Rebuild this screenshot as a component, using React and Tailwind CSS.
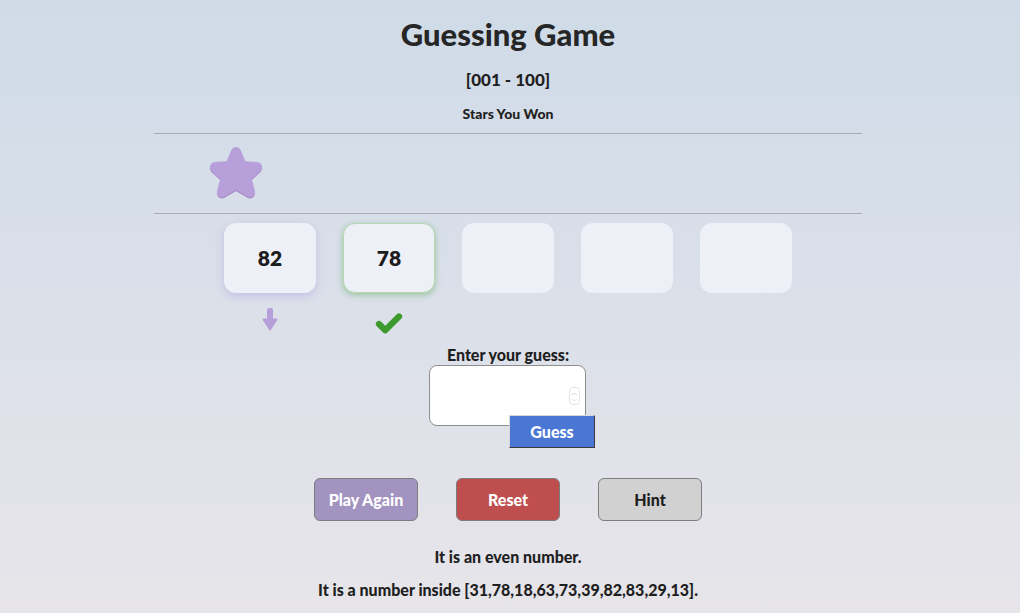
import { Check } from 'lucide-react';

const guesses = [
  { value: '82', state: 'low' },
  { value: '78', state: 'right' },
  { value: '', state: 'empty' },
  { value: '', state: 'empty' },
  { value: '', state: 'empty' },
];

const starPath = 'M28 6 L34 20 L49 21 L38 31 L42 46 L28 38 L14 46 L18 31 L7 21 L22 20 Z';

function Star() {
  return (
    <svg width="56" height="56" viewBox="0 0 56 56">
      <path d={starPath} fill="#a88fcc" stroke="#a88fcc" strokeWidth="10" strokeLinejoin="round" transform="translate(0 1.5)" />
      <path d={starPath} fill="#b7a0d9" stroke="#b7a0d9" strokeWidth="10" strokeLinejoin="round" />
    </svg>
  );
}

function DownArrow() {
  return (
    <svg width="16" height="24" viewBox="0 0 16 24">
      <rect x="5" y="1" width="6" height="13" rx="1.5" fill="#b7a0d9" />
      <path d="M1.5 12.5 L14.5 12.5 L8 22.5 Z" fill="#b7a0d9" stroke="#b7a0d9" strokeWidth="2" strokeLinejoin="round" />
    </svg>
  );
}

function GuessBox({ value, state }) {
  const ring =
    state === 'right'
      ? 'border border-[#b5d8b0] shadow-[0_2px_6px_rgba(70,160,70,0.45)]'
      : state === 'low'
      ? 'shadow-[0_3px_8px_rgba(175,150,225,0.45)]'
      : '';
  return (
    <div className="flex flex-col items-center">
      <div
        className={`w-[92px] h-[70px] rounded-[12px] bg-[#eef0f7] flex items-center justify-center text-[21px] font-extrabold text-[#1d1d1d] ${ring}`}
      >
        {value}
      </div>
      <div className="h-[42px] pt-[14px] flex justify-center">
        {state === 'low' && <DownArrow />}
        {state === 'right' && <Check size={30} strokeWidth={5} color="#3d9a2c" className="mt-[2px]" />}
      </div>
    </div>
  );
}

export default function App() {
  return (
    <div
      className="min-h-[613px] pr-[4px] bg-gradient-to-b from-[#cfdbe8] to-[#e7e5ea] flex flex-col items-center text-[#1f1f1f]"
      style={{ fontFamily: 'Lato, "Noto Sans", sans-serif' }}
    >
      <h1 className="mt-[14px] text-[31px] font-black leading-[40px] text-[#262626]">Guessing Game</h1>
      <div className="mt-[15px] text-[17px] font-black leading-[22px]">[001 - 100]</div>
      <div className="mt-[14px] text-[14px] font-black leading-[18px]">Stars You Won</div>

      <div className="w-[708px] mt-[10px] border-t border-b border-[#a8abb0] h-[81px] flex items-center pl-[54px]">
        <Star />
      </div>

      <div className="mt-[9px] flex gap-[27px]">
        {guesses.map((g, i) => (
          <GuessBox key={i} value={g.value} state={g.state} />
        ))}
      </div>

      <div className="mt-[10px] text-[16px] font-black leading-[20px]">Enter your guess:</div>
      <div className="flex items-start pl-[8px]">
        <div className="w-[157px] h-[61px] rounded-[8px] border border-[#8e8e8e] bg-white flex items-center justify-end pr-[5px]">
          <div className="flex flex-col items-center text-[#b8b8b8] text-[7px] leading-[8px] border border-[#e3e3e3] rounded-[4px] px-[1px]">
            <span>︿</span>
            <span>﹀</span>
          </div>
        </div>
        <button className="relative ml-[-77px] mt-[50px] w-[86px] h-[33px] bg-[#4a77d4] text-white text-[16px] font-black border border-[#3b3b3b] border-t-[#d8d8d8] border-l-[#d8d8d8]">
          Guess
        </button>
      </div>

      <div className="mt-[30px] flex gap-[38px]">
        <button className="w-[104px] h-[43px] rounded-[6px] border border-[#7d7d7d] bg-[#a393c0] text-white text-[16px] font-black">
          Play Again
        </button>
        <button className="w-[104px] h-[43px] rounded-[6px] border border-[#7d7d7d] bg-[#bf4f4f] text-white text-[16px] font-black">
          Reset
        </button>
        <button className="w-[104px] h-[43px] rounded-[6px] border border-[#7d7d7d] bg-[#d1d1d1] text-[#1d1d1d] text-[16px] font-black">
          Hint
        </button>
      </div>

      <p className="mt-[26px] text-[16px] font-black leading-[20px]">It is an even number.</p>
      <p className="mt-[13px] text-[16px] font-black leading-[20px]">
        It is a number inside [31,78,18,63,73,39,82,83,29,13].
      </p>
    </div>
  );
}
